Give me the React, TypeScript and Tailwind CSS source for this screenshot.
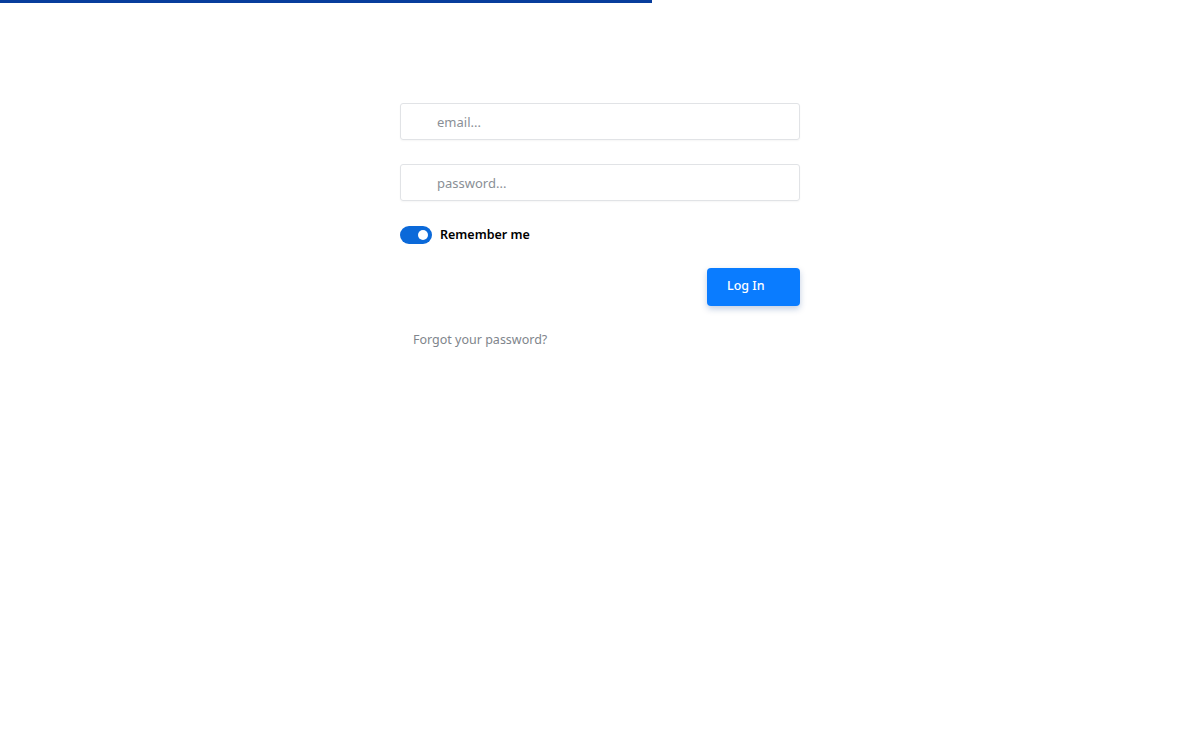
export default function App() {
  return (
    <div className="min-h-[740px] w-full bg-white font-['Noto_Sans',sans-serif]">
      <div className="h-[3px] w-[652px] bg-[#073d9c]" />

      <div className="mx-auto mt-[100px] flex w-[400px] flex-col">
        <input
          type="email"
          placeholder="email..."
          className="h-[37px] w-full rounded-[3px] border border-[#e1e3e6] pl-[36px] text-[13px] text-[#333] shadow-[0_1px_2px_rgba(0,0,0,0.04)] outline-none placeholder:text-[#8a8f96]"
        />
        <input
          type="password"
          placeholder="password..."
          className="mt-[24px] h-[37px] w-full rounded-[3px] border border-[#e1e3e6] pl-[36px] text-[13px] text-[#333] shadow-[0_1px_2px_rgba(0,0,0,0.04)] outline-none placeholder:text-[#8a8f96]"
        />

        <label className="mt-[25px] flex items-center gap-2">
          <span className="relative flex h-[18px] w-[32px] items-center rounded-full bg-[#0b69d9]">
            <span className="absolute right-[4px] h-[10px] w-[10px] rounded-full bg-white" />
          </span>
          <span className="text-[12.5px] font-semibold text-black">Remember me</span>
        </label>

        <div className="mt-[23px] flex justify-end">
          <button className="h-[38px] w-[93px] rounded-[4px] bg-[#0a7cff] pl-[20px] text-left text-[12.5px] font-medium text-white shadow-[0_3px_6px_rgba(10,60,140,0.25)]">
            Log In
          </button>
        </div>

        <a className="mt-[25px] pl-[13px] text-[12.5px] text-[#80858c]">Forgot your password?</a>
      </div>
    </div>
  )
}
